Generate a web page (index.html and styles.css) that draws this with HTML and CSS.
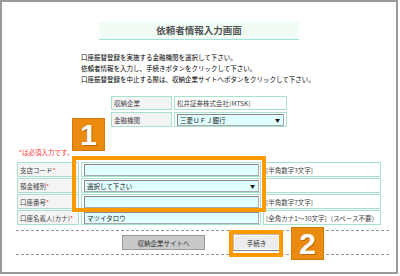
FILE: index.html
```html
<!DOCTYPE html>
<html lang="ja">
  <head>
    <meta charset="UTF-8" />
    <title>依頼者情報入力画面</title>
    <link rel="stylesheet" href="styles.css">
  </head>
  <body>
    <div class="screen">
      <h1 class="title">依頼者情報入力画面</h1>
      <p class="intro">
        口座振替登録を実施する金融機関を選択して下さい。<br />
        依頼者情報を入力し、手続きボタンをクリックして下さい。<br />
        口座振替登録を中止する際は、収納企業サイトへボタンをクリックして下さい。
      </p>

      <table class="bank">
        <tr>
          <th>収納企業</th>
          <td class="plain">松井証券株式会社(MTSK)</td>
        </tr>
        <tr>
          <th>金融機関</th>
          <td>
            <div class="select">
              <select name="bank">
                <option>三菱ＵＦＪ銀行</option>
              </select>
            </div>
          </td>
        </tr>
      </table>

      <p class="note">*は必須入力です。</p>

      <table class="form">
        <tr>
          <th>支店コード<span class="req">*</span></th>
          <td class="value"><input class="field" type="text" name="branch" /></td>
          <td class="hint">[半角数字3文字]</td>
        </tr>
        <tr>
          <th>預金種別<span class="req">*</span></th>
          <td class="value">
            <div class="select">
              <select name="kind">
                <option>選択して下さい</option>
              </select>
            </div>
          </td>
          <td class="hint"></td>
        </tr>
        <tr>
          <th>口座番号<span class="req">*</span></th>
          <td class="value"><input class="field" type="text" name="number" /></td>
          <td class="hint">[半角数字7文字]</td>
        </tr>
        <tr>
          <th>口座名義人(カナ)<span class="req">*</span></th>
          <td class="value"><input class="field" type="text" name="holder" value="マツイタロウ" /></td>
          <td class="hint">[全角カナ1～30文字]（スペース不要）</td>
        </tr>
      </table>

      <div class="actions">
        <button class="btn btn-back" type="button">収納企業サイトへ</button>
        <button class="btn btn-next" type="submit">手続き</button>
      </div>

      <!-- 説明用の番号と枠 -->
      <span class="badge badge-1">1</span>
      <span class="callout callout-1"></span>
      <span class="badge badge-2">2</span>
      <span class="callout callout-2"></span>
    </div>
  </body>
</html>
```

FILE: styles.css
```css
* {
  box-sizing: border-box;
}
body {
  margin: 0;
  font-family: "Noto Sans CJK JP", sans-serif;
  font-size: 6.5px;
  color: #333;
  background: #fff;
}
.screen {
  position: relative;
  width: 398px;
  height: 274px;
  border: 2px solid #999;
  background: #fff;
}
.title {
  width: 200px;
  height: 18px;
  margin: 20px auto 0;
  background: #f1fcf5;
  border-bottom: 1px solid #9fe2da;
  font-size: 9.5px;
  line-height: 17px;
  font-weight: bold;
  text-align: center;
  color: #555;
}
.intro {
  width: 236px;
  margin: 12px auto 0;
  line-height: 11px;
  color: #000;
}

table {
  border-collapse: separate;
  table-layout: fixed;
}
th,
td {
  padding: 0 2px;
  border: 1px solid #a9e2cc;
  font-weight: normal;
  text-align: left;
  white-space: nowrap;
  color: #444;
}
th {
  background: #f4f4f4;
}

.bank {
  width: 180px;
  margin: 9px auto 0;
  border-spacing: 2px;
}
.bank th {
  width: 61px;
  height: 14px;
}
.bank tr + tr th,
.bank tr + tr td {
  height: 15px;
}

.note {
  margin: 19px 0 0 17px;
  line-height: 8px;
  color: #f33;
}

.form {
  width: 368px;
  margin: 5px auto 0;
  border-spacing: 2px 1px;
}
.form th {
  width: 62px;
  height: 15px;
}
.form .value {
  width: 180px;
  padding: 0 1px 0 2px;
}
.hint {
  padding-left: 2px;
}
.req {
  color: #f33;
}

.field,
.select select {
  display: block;
  width: 100%;
  height: 12px;
  margin: 0;
  padding: 0 2px;
  border: 1px solid #aaa;
  border-top-color: #888;
  border-left-color: #888;
  background: #e0feff;
  font-family: inherit;
  font-size: 6.5px;
  color: #222;
  outline: none;
}
.select {
  position: relative;
}
.select select {
  appearance: none;
  border-radius: 0;
  line-height: 10px;
}
.select::after {
  content: "▼";
  position: absolute;
  right: 4px;
  top: 1px;
  font-size: 5px;
  line-height: 10px;
  color: #111;
}

.actions {
  display: flex;
  justify-content: center;
  align-items: center;
  gap: 28px;
  width: 373px;
  height: 25px;
  margin: 4px 0 0 14px;
  padding-right: 3px;
  border-top: 1px dashed #999;
  border-bottom: 1px dashed #999;
}
.btn {
  margin: 0;
  padding: 0;
  font-family: inherit;
  font-size: 6.5px;
  color: #333;
  border-radius: 0;
}
.btn-back {
  width: 83px;
  height: 15px;
  background: #c9c9c9;
  border: 1px solid #9a9a9a;
}
.btn-next {
  width: 47px;
  height: 17px;
  background: #ededed;
  border: 1px solid #bbb;
  border-right-color: #888;
  border-bottom-color: #888;
  box-shadow: inset 0 0 0 1px #fff;
}

.badge {
  position: absolute;
  width: 33px;
  height: 33px;
  background: #ea8a0f;
  border: 1px solid #d27a08;
  font-family: "Liberation Sans", Arial, sans-serif;
  font-size: 30px;
  font-weight: bold;
  line-height: 31px;
  text-align: center;
  color: #fff;
  text-shadow: 1px 1px 0 rgba(120, 60, 0, 0.45);
}
.badge-1 {
  left: 70px;
  top: 116px;
}
.badge-2 {
  left: 289px;
  top: 225px;
}
.callout {
  position: absolute;
  border: 4px solid #ff9a00;
}
.callout-1 {
  left: 70px;
  top: 154px;
  width: 194px;
  height: 56px;
}
.callout-2 {
  left: 227px;
  top: 228px;
  width: 54px;
  height: 27px;
}
```
